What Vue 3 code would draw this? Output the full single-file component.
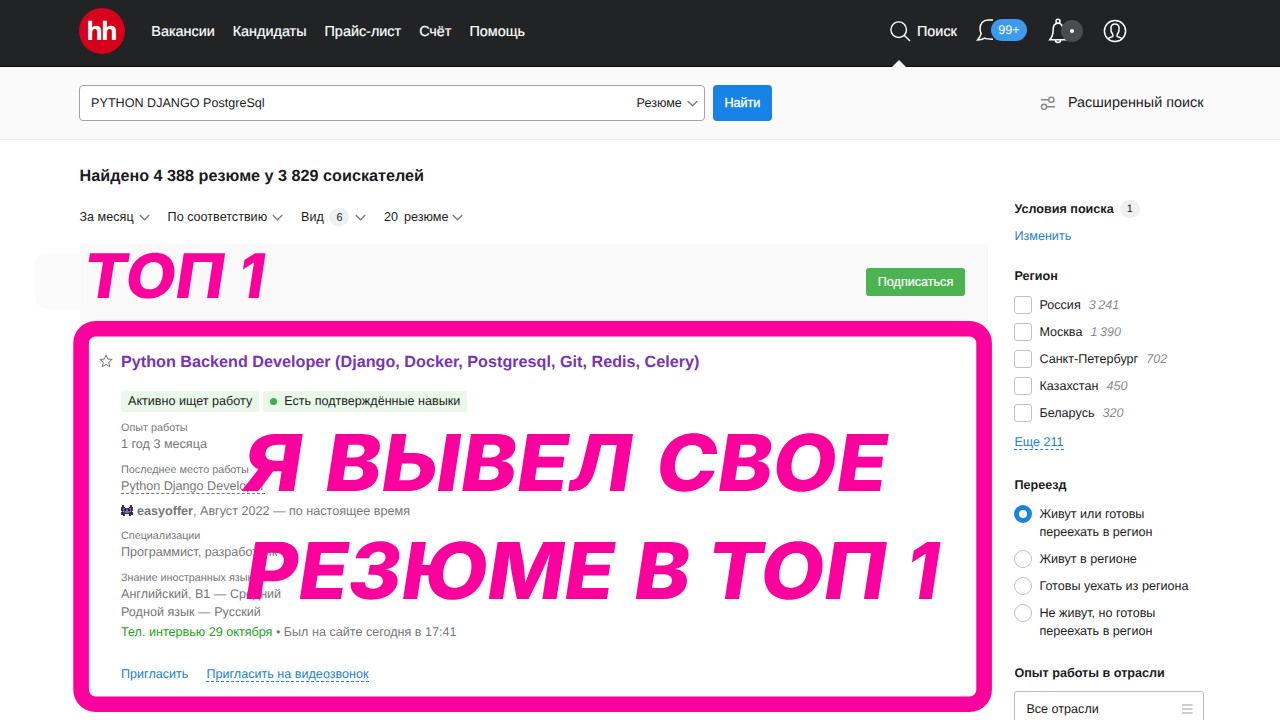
<template>
  <div class="page">
    <header class="header">
      <a class="header__logo" href="#">hh</a>
      <nav class="header__nav">
        <a v-for="item in menu" :key="item" class="header__link" href="#">{{ item }}</a>
      </nav>
      <div class="header__tools">
        <a class="header__search" href="#">
          <svg width="21" height="21" viewBox="0 0 21 21" fill="none" stroke="#fff" stroke-width="1.4">
            <circle cx="8.7" cy="8.7" r="7.8" />
            <path d="M14.2 14.2L20 20" />
          </svg>
          <span>Поиск</span>
        </a>
        <a class="header__chat" href="#">
          <svg width="24" height="24" viewBox="0 0 24 24" fill="none" stroke="#fff" stroke-width="1.5">
            <path d="M17 2H12C7 2 4 5.7 4 10.4C4 12.6 4.6 14 5.2 15.6C4.6 17.8 3.2 20 1.6 22C4.4 22 6.6 21.4 8.6 20.2C10 20.9 11.2 21.2 17 21.2" />
          </svg>
          <span class="header__badge">99+</span>
        </a>
        <a class="header__bell" href="#">
          <svg width="24" height="26" viewBox="0 0 24 26" fill="none" stroke="#fff" stroke-width="1.5">
            <circle cx="10" cy="3.2" r="2" />
            <path d="M10 5.2C6.4 5.2 5.2 8 5.2 11.5C5.2 16 4.4 18.8 1.8 21.8H18.2C15.5 18.8 14.8 16 14.8 11.5C14.8 8 13.6 5.2 10 5.2ZM7.4 22C7.4 25.4 12.6 25.4 12.6 22" />
          </svg>
          <span class="header__dot"></span>
        </a>
        <a class="header__user" href="#">
          <svg width="24" height="24" viewBox="0 0 24 24" fill="none" stroke="#fff" stroke-width="1.5">
            <circle cx="12" cy="12" r="10.6" />
            <path d="M5 19.7C6.2 18.5 8 18.2 9.5 17.6C10.2 17.2 10 15.7 9.6 15.2C8.1 13.4 7.7 11.4 7.9 9C8.1 6.4 9.8 5 12 5C14.2 5 15.9 6.4 16.1 9C16.3 11.4 15.9 13.4 14.4 15.2C14 15.7 13.8 17.2 14.5 17.6C16 18.2 17.8 18.5 19 19.7" />
          </svg>
        </a>
      </div>
    </header>

    <section class="search">
      <div class="search__field">
        <span>PYTHON DJANGO PostgreSql</span>
        <span class="search__kind">Резюме
          <svg class="chevron" viewBox="0 0 11 7"><path d="M.7 .9L5.5 5.8L10.3 .9" /></svg>
        </span>
      </div>
      <button class="search__submit" type="button">Найти</button>
      <a class="search__advanced" href="#">
        <svg width="16" height="16" viewBox="0 0 16 16" fill="none" stroke="#858585" stroke-width="1.4">
          <path d="M1 4.7H8.4M6.8 11.8H15" />
          <circle cx="11.3" cy="4.7" r="2.6" />
          <circle cx="4" cy="11.8" r="2.6" />
        </svg>
        <span>Расширенный поиск</span>
      </a>
    </section>

    <div class="content">
      <main class="main">
        <h1 class="main__title">Найдено 4 388 резюме у 3 829 соискателей</h1>
        <div class="filters">
          <button v-for="filter in filters" :key="filter.label" class="filters__item" type="button">
            <span>{{ filter.label }}</span>
            <span v-if="filter.count" class="pill">{{ filter.count }}</span>
            <svg class="chevron" viewBox="0 0 11 7"><path d="M.7 .9L5.5 5.8L10.3 .9" /></svg>
          </button>
        </div>

        <div class="subscribe">
          <div class="subscribe__tail"></div>
          <button class="subscribe__button" type="button">Подписаться</button>
        </div>

        <article class="resume">
          <svg class="resume__star" viewBox="0 0 14 14" fill="none" stroke="#777" stroke-width="1">
            <path d="M7 .9L8.7 5.1L13.2 5.4L9.7 8.3L10.8 12.8L7 10.4L3.2 12.8L4.3 8.3L.8 5.4L5.3 5.1Z" />
          </svg>
          <div class="resume__body">
            <h2 class="resume__title">Python Backend Developer (Django, Docker, Postgresql, Git, Redis, Celery)</h2>
            <div class="resume__tags">
              <span class="tag">Активно ищет работу</span>
              <span class="tag"><i class="tag__dot"></i>Есть подтверждённые навыки</span>
            </div>
            <div class="fact">
              <div class="fact__label">Опыт работы</div>
              <div>1 год 3 месяца</div>
            </div>
            <div class="fact">
              <div class="fact__label">Последнее место работы</div>
              <div><span class="dashed">Python Django Developer</span></div>
            </div>
            <div class="resume__company">
              <svg width="12" height="11" viewBox="0 0 12 11">
                <path d="M1 0H3V2H4V3H8V2H9V0H11V2H12V6H11V7H12V10H10V11H8V9H4V11H2V10H0V7H1V6H0V2H1Z" fill="#3b2c52" />
                <path d="M2 3H4V4H8V3H10V7H8V8H4V7H2Z" fill="#8b63b5" />
                <path d="M3 4H5V6H3ZM7 4H9V6H7Z" fill="#251b36" />
              </svg>
              <span><b>easyoffer</b>, Август 2022 — по настоящее время</span>
            </div>
            <div class="fact">
              <div class="fact__label">Специализации</div>
              <div>Программист, разработчик</div>
            </div>
            <div class="fact">
              <div class="fact__label">Знание иностранных языков</div>
              <div>Английский, B1 — Средний</div>
              <div class="fact__second">Родной язык — Русский</div>
            </div>
            <div class="resume__status"><span>Тел. интервью 29 октября</span> • Был на сайте сегодня в 17:41</div>
            <div class="resume__actions">
              <a href="#">Пригласить</a>
              <a class="dashed" href="#">Пригласить на видеозвонок</a>
            </div>
          </div>
        </article>
      </main>

      <aside class="sidebar">
        <h3 class="sidebar__title">Условия поиска <span class="pill">1</span></h3>
        <a class="sidebar__edit" href="#">Изменить</a>

        <h3 class="sidebar__title sidebar__title--region">Регион</h3>
        <label v-for="region in regions" :key="region.name" class="option">
          <span class="option__box"></span>
          <span>{{ region.name }}<em class="option__count">{{ region.count }}</em></span>
        </label>
        <a class="sidebar__more dashed" href="#">Еще 211</a>

        <h3 class="sidebar__title sidebar__title--move">Переезд</h3>
        <label v-for="move in moves" :key="move" class="option" @click="selected = move">
          <span class="option__radio" :class="{ 'option__radio--on': selected === move }"></span>
          <span>{{ move }}</span>
        </label>

        <h3 class="sidebar__title sidebar__title--industry">Опыт работы в отрасли</h3>
        <div class="select">
          <span>Все отрасли</span>
          <svg width="11" height="10" viewBox="0 0 11 10" stroke="#999" stroke-width="1.1"><path d="M0 1H10.5M0 5H10.5M0 9H10.5" /></svg>
        </div>
      </aside>
    </div>

    <svg class="callout" viewBox="0 0 1280 720">
      <rect x="81.1" y="328.8" width="903" height="375.4" rx="14.5" fill="none" stroke="#fb009c" stroke-width="15.6" />
      <text
        v-for="(word, i) in words"
        :key="i"
        :transform="`translate(${word.x} ${word.y}) skewX(-8.7)`"
        :font-size="word.size"
        :textLength="word.width"
        lengthAdjust="spacingAndGlyphs"
      >{{ word.text }}</text>
    </svg>
  </div>
</template>

<script setup>
import { ref } from 'vue';

const menu = ['Вакансии', 'Кандидаты', 'Прайс-лист', 'Счёт', 'Помощь'];

const filters = [
  { label: 'За месяц' },
  { label: 'По соответствию' },
  { label: 'Вид', count: 6 },
  { label: '20  резюме' },
];

const regions = [
  { name: 'Россия', count: '3\u2009241' },
  { name: 'Москва', count: '1\u2009390' },
  { name: 'Санкт-Петербург', count: '702' },
  { name: 'Казахстан', count: '450' },
  { name: 'Беларусь', count: '320' },
];

const moves = [
  'Живут или готовы переехать в регион',
  'Живут в регионе',
  'Готовы уехать из региона',
  'Не живут, но готовы переехать в регион',
];
const selected = ref(moves[0]);

const words = [
  { text: 'ТОП', x: 81, y: 298, size: 61.5, width: 141 },
  { text: '1', x: 236, y: 298, size: 61.5, width: 26 },
  { text: 'Я', x: 240, y: 491, size: 78.5, width: 59 },
  { text: 'ВЫВЕЛ', x: 322, y: 491, size: 78.5, width: 307 },
  { text: 'СВОЕ', x: 653, y: 491, size: 78.5, width: 231 },
  { text: 'РЕЗЮМЕ', x: 242, y: 599, size: 78.5, width: 369 },
  { text: 'В', x: 631, y: 599, size: 78.5, width: 56 },
  { text: 'ТОП', x: 704, y: 599, size: 78.5, width: 179 },
  { text: '1', x: 903, y: 599, size: 78.5, width: 33 },
];
</script>

<style>
body {
  margin: 0;
  background: #fff;
}
</style>

<style scoped>
.page {
  position: relative;
  width: 1280px;
  height: 720px;
  overflow: hidden;
  background: #fff;
  color: #1c1c1e;
  font-family: 'Liberation Sans', Arial, sans-serif;
  font-size: 12.6px;
  line-height: 16px;
  text-rendering: geometricPrecision;
}

.page * {
  box-sizing: border-box;
}

a {
  color: #2580cf;
  text-decoration: none;
}

button {
  padding: 0;
  border: none;
  font: inherit;
  color: inherit;
  background: none;
}

h1,
h2,
h3 {
  margin: 0;
}

.header {
  height: 67px;
  padding: 0 80px 4px 79px;
  display: flex;
  align-items: center;
  background: #222325;
  border-bottom: 1px solid #090909;
  font-size: 14.4px;
}

.header a {
  color: #fff;
}

.header__logo {
  width: 46px;
  height: 46px;
  border-radius: 50%;
  background: #d6001c;
  font-family: 'Open Sans', sans-serif;
  font-size: 25.5px;
  font-weight: 700;
  line-height: 46px;
  letter-spacing: -2px;
  text-indent: -2px;
  text-align: center;
}

.header__nav {
  margin: 1px 0 0 26.3px;
  display: flex;
  gap: 18px;
}

.header__link {
  -webkit-text-stroke: 0.2px #fff;
}

.header__tools {
  position: absolute;
  left: 890px;
  top: 18px;
  height: 26px;
  display: flex;
  align-items: center;
}

.header__search {
  position: relative;
  width: 86px;
  display: flex;
  align-items: center;
  gap: 6px;
  -webkit-text-stroke: 0.2px #fff;
}

.header__search span {
  margin-top: 1px;
}

.header__search::after {
  content: '';
  position: absolute;
  left: 2px;
  top: 39px;
  border: 7.5px solid transparent;
  border-top: none;
  border-bottom-color: #fafafa;
}

.header__chat {
  height: 26px;
  width: 72px;
  display: flex;
}

.header__badge {
  width: 36px;
  height: 22px;
  margin: 1px 0 0 -9px;
  border-radius: 11px;
  background: #3c9bee;
  font-size: 12.6px;
  line-height: 22px;
  text-align: center;
  z-index: 1;
}

.header__bell {
  height: 26px;
  width: 55px;
  display: flex;
}

.header__dot {
  width: 22px;
  height: 22px;
  margin: 2px 0 0 -11px;
  border: 9px solid #4c4c4e;
  border-radius: 50%;
  background: #fff;
  z-index: 1;
}

.header__user {
  height: 24px;
}

.search {
  height: 73px;
  padding: 18px 76.5px 0 79.4px;
  display: flex;
  background: #fafafa;
  border-bottom: 1px solid #eeeeee;
}

.search__field {
  width: 626px;
  height: 36px;
  padding: 0 6.5px 1px 10.7px;
  display: flex;
  align-items: center;
  justify-content: space-between;
  border: 1px solid #a3a3a3;
  border-radius: 4px;
  background: #fff;
}

.search__kind {
  display: flex;
  align-items: center;
  gap: 5px;
}

.chevron {
  width: 11px;
  height: 7px;
  margin-top: 1px;
  fill: none;
  stroke: #7c7c82;
  stroke-width: 1.4;
}

.search__submit {
  width: 59px;
  height: 36px;
  margin-left: 7.5px;
  border-radius: 4px;
  background: #1783e6;
  color: #fff;
  -webkit-text-stroke: 0.3px #fff;
}

.search__advanced {
  height: 36px;
  margin-left: auto;
  display: flex;
  align-items: center;
  gap: 12px;
  color: #1c1c1e;
  font-size: 14.4px;
}

.content {
  padding: 0 75.6px 0 79.5px;
  display: flex;
  justify-content: space-between;
}

.main {
  width: 908.5px;
}

.main__title {
  margin-top: 26px;
  font-size: 16.2px;
  line-height: 20px;
}

.filters {
  height: 18px;
  margin-top: 22px;
  display: flex;
  gap: 18px;
}

.filters__item {
  display: flex;
  align-items: center;
  gap: 5px;
  white-space: pre;
}

.filters__item:last-child {
  gap: 4px;
  word-spacing: -0.5px;
}

.filters .pill {
  margin: 0 0.5px;
}

.pill {
  min-width: 20px;
  height: 18px;
  border-radius: 9px;
  background: #eff0f2;
  font-size: 10.8px;
  font-weight: 400;
  line-height: 18px;
  text-align: center;
}

.subscribe {
  position: relative;
  height: 82px;
  margin: 18px 0 0 0.5px;
  padding: 24px 23px 0 0;
  display: flex;
  justify-content: flex-end;
  background: #f9f9fa;
}

.subscribe__tail {
  position: absolute;
  left: -45px;
  top: 9px;
  width: 46px;
  height: 56px;
  border-radius: 12px 0 0 12px;
  background: #fbfbfb;
}

.subscribe__button {
  width: 99px;
  height: 28px;
  border-radius: 3px;
  background: #4bb34f;
  color: #fff;
  -webkit-text-stroke: 0.2px #fff;
}

.resume {
  padding: 26px 0 0 19.5px;
  display: flex;
  gap: 8px;
  color: #77777a;
}

.resume__star {
  width: 14px;
  height: 14px;
  margin-top: 2px;
}

.resume__title {
  color: #7735b5;
  font-size: 16.2px;
  line-height: 20px;
}

.resume__tags {
  margin: 19px 0 8.4px;
  display: flex;
  gap: 4px;
}

.tag {
  height: 21px;
  padding: 0 7px 1px;
  display: flex;
  align-items: center;
  border-radius: 2px;
  background: #eaf8ea;
  color: #1c1c1e;
}

.tag__dot {
  width: 7px;
  height: 7px;
  margin: 1px 7px 0 0;
  border-radius: 50%;
  background: #3fae49;
}

.fact {
  margin-bottom: 9.3px;
}

.fact__label {
  font-size: 10.8px;
}

.fact__second {
  margin-top: 2px;
}

.dashed {
  border-bottom: 1px dashed currentColor;
}

.resume__company {
  margin-bottom: 9.3px;
  display: flex;
  align-items: center;
  gap: 4px;
}

.resume__status {
  margin-top: -5px;
}

.resume__status span {
  color: #1aa31a;
}

.resume__actions {
  margin-top: 27px;
  display: flex;
  gap: 18px;
  line-height: 14px;
}

.sidebar {
  width: 190px;
  padding-top: 60px;
}

.sidebar__title {
  display: flex;
  gap: 6px;
  font-size: 12.6px;
  line-height: 18px;
}

.sidebar__edit {
  display: block;
  margin-top: 10px;
}

.sidebar__title--region {
  margin: 23px 0 11px;
}

.option {
  margin-bottom: 9px;
  display: flex;
  gap: 7px;
  line-height: 18px;
}

.option > span:last-child {
  flex: 1;
}

.option__box,
.option__radio {
  width: 18px;
  height: 18px;
  border: 1px solid #c2c2c4;
  border-radius: 3px;
  background: #fff;
}

.option__radio {
  border-radius: 50%;
}

.option__radio--on {
  border: 5.5px solid #1783e6;
}

.option__count {
  margin-left: 8px;
  color: #8a8a8c;
}

.sidebar__more {
  display: inline-block;
  margin-top: 4px;
  line-height: 14px;
}

.sidebar__title--move {
  margin: 26px 0 11px;
}

.sidebar__title--industry {
  margin: 24px 0 9px;
}

.select {
  height: 36px;
  padding: 0 10px 0 11px;
  display: flex;
  align-items: center;
  justify-content: space-between;
  border: 1px solid #bdbdbf;
  border-radius: 3px;
}

.callout {
  position: absolute;
  left: 0;
  top: 0;
  width: 1280px;
  height: 720px;
  pointer-events: none;
  fill: #fb009c;
  font-family: Inter, sans-serif;
  font-weight: 800;
}
</style>
